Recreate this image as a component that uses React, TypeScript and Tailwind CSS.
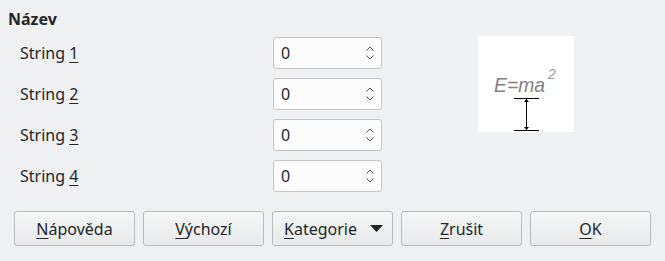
import React from 'react';

const FONT = { fontFamily: '"Noto Sans", "Open Sans", sans-serif' };

function Spin() {
  return (
    <svg width="10" height="16" viewBox="0 0 10 16" className="text-[#4d4f52]">
      <path d="M1.5 5.5 L5 2 L8.5 5.5" fill="none" stroke="currentColor" strokeWidth="1" />
      <path d="M1.5 10.5 L5 14 L8.5 10.5" fill="none" stroke="currentColor" strokeWidth="1" />
    </svg>
  );
}

function Row({ n }: { n: string }) {
  return (
    <div className="flex items-center h-[32px]">
      <div className="w-[253px] text-[16px] text-[#232629]">
        String <span className="underline underline-offset-[3px] decoration-1">{n}</span>
      </div>
      <div className="w-[109px] h-[32px] rounded-[3px] border border-[#c3c5c6] bg-[#fcfcfc] flex items-center justify-between pl-[7px] pr-[6px]">
        <span className="text-[16px] text-[#232629]">0</span>
        <Spin />
      </div>
    </div>
  );
}

function Btn({ children }: { children: React.ReactNode }) {
  return (
    <button className="w-[121px] h-[35px] rounded-[3px] border border-[#b8babc] bg-gradient-to-b from-[#f5f6f6] to-[#e8e9ea] text-[16px] text-[#232629] flex items-center justify-center">
      {children}
    </button>
  );
}

function U({ c }: { c: string }) {
  return <span className="underline underline-offset-[3px] decoration-1">{c}</span>;
}

export default function App() {
  return (
    <div className="w-[665px] h-[261px] bg-[#eff0f1] overflow-hidden" style={FONT}>
      <div className="pt-[7px] pl-[8px] h-[36px] text-[16px] font-bold text-[#232629]">Název</div>
      <div className="flex">
        <div className="pl-[20px] pt-[1px] flex flex-col gap-[9px]">
          <Row n="1" />
          <Row n="2" />
          <Row n="3" />
          <Row n="4" />
        </div>
        <div className="ml-[96px] w-[96px] h-[96px] bg-white">
          <svg width="96" height="96" viewBox="0 0 96 96">
            <text x="16" y="56" textLength="51" lengthAdjust="spacingAndGlyphs" fontFamily="Liberation Sans, Arial, sans-serif" fontStyle="italic" fontSize="21" fill="#808080">E=ma</text>
            <text x="70" y="43" fontFamily="Liberation Sans, Arial, sans-serif" fontStyle="italic" fontSize="14" fontWeight="300" fill="#9a9a9a">2</text>
            <line x1="36" y1="62.5" x2="61" y2="62.5" stroke="#000" strokeWidth="1" />
            <line x1="36" y1="94.5" x2="61" y2="94.5" stroke="#000" strokeWidth="1" />
            <line x1="48.5" y1="63" x2="48.5" y2="94" stroke="#000" strokeWidth="1" />
            <path d="M46 66 L48.5 63 L51 66 Z" fill="#000" />
            <path d="M46 91 L48.5 94 L51 91 Z" fill="#000" />
          </svg>
        </div>
      </div>
      <div className="flex gap-[8px] pl-[14px] mt-[19px]">
        <Btn><U c="N" />ápověda</Btn>
        <Btn><U c="V" />ýchozí</Btn>
        <button className="w-[121px] h-[35px] rounded-[3px] border border-[#b8babc] bg-gradient-to-b from-[#f5f6f6] to-[#e8e9ea] text-[16px] text-[#232629] flex items-center justify-between pl-[11px] pr-[9px]">
          <span><U c="K" />ategorie</span>
          <svg width="13" height="7" viewBox="0 0 13 7"><path d="M0 0 L13 0 L6.5 7 Z" fill="#232629" /></svg>
        </button>
        <Btn><U c="Z" />rušit</Btn>
        <Btn><U c="O" />K</Btn>
      </div>
    </div>
  );
}
